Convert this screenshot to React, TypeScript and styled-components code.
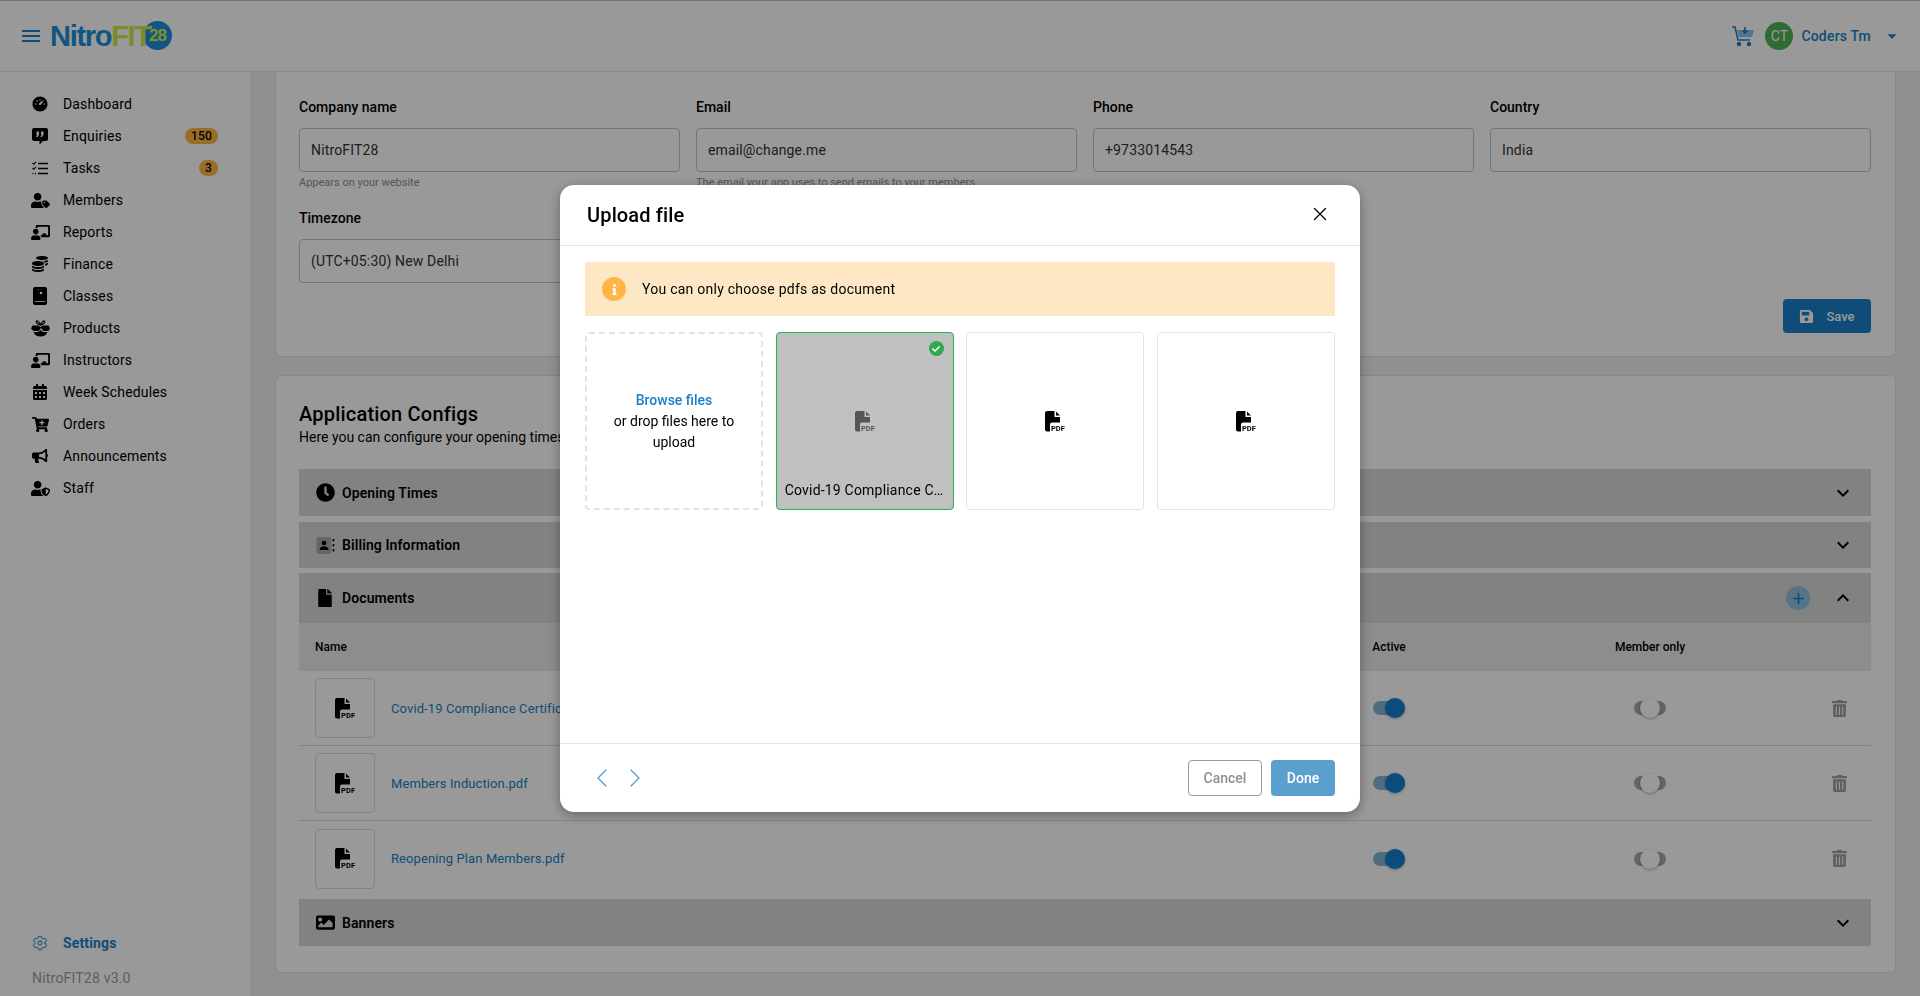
import React from "react";
import styled, { createGlobalStyle } from "styled-components";
import {
	FaUserTag,
	FaCoins,
	FaChalkboardTeacher,
	FaCalendarAlt,
	FaCartPlus,
	FaBullhorn,
	FaUserShield,
	FaClock,
	FaFile,
	FaImage,
	FaSave,
	FaTrashAlt,
	FaCheck,
	FaInfo,
} from "react-icons/fa";
import { RiDashboard3Fill } from "react-icons/ri";
import { IoSettingsOutline } from "react-icons/io5";
import { MdMenu, MdExpandMore, MdExpandLess, MdAdd, MdArrowDropDown } from "react-icons/md";
import { X, ChevronLeft, ChevronRight } from "lucide-react";

const GlobalStyle = createGlobalStyle`
	html, body {
		margin: 0;
		padding: 0;
		height: 100%;
		overflow: hidden;
		background: #f0f0f0;
		font-family: Roboto, "Liberation Sans", sans-serif;
		color: #000;
	}
	* {
		box-sizing: border-box;
	}
`;

const Page = styled.div`
	width: 1920px;
	height: 996px;
	display: flex;
	flex-direction: column;
	overflow: hidden;
`;

const TopBar = styled.header`
	height: 72px;
	flex-shrink: 0;
	background: #fff;
	border-top: 1px solid #a9c6dc;
	border-bottom: 1px solid #e3e3e3;
	display: flex;
	align-items: center;
	padding: 0 17px 0 19px;
	color: #1a7fc7;
`;

const Logo = styled.div`
	position: relative;
	display: flex;
	align-items: center;
	margin-left: 7px;
	width: 122px;
	height: 30px;
	font-family: "Liberation Sans", sans-serif;
	font-weight: 700;
	font-size: 29px;
	letter-spacing: -1.3px;
`;

const LogoCircle = styled.span`
	position: absolute;
	right: 0;
	top: 0;
	width: 29px;
	height: 29px;
	border-radius: 50%;
	background: #1d8fdb;
	color: #d0f050;
	font-size: 17px;
	letter-spacing: -1px;
	display: flex;
	align-items: center;
	justify-content: center;
`;

const LogoNitro = styled.span`
	color: #1d8fdb;
`;

const LogoFit = styled.span`
	position: relative;
	color: #cbe845;
`;

const TopRight = styled.div`
	margin-left: auto;
	display: flex;
	align-items: center;
`;

const Avatar = styled.span`
	width: 28px;
	height: 28px;
	border-radius: 50%;
	background: #4fb255;
	color: #fff;
	font-size: 14px;
	display: flex;
	align-items: center;
	justify-content: center;
	margin: 0 8px 0 10px;
`;

const UserName = styled.span`
	font-size: 14px;
	font-weight: 500;
	letter-spacing: 0.2px;
	margin-right: 10px;
`;

const Body = styled.div`
	flex: 1;
	display: flex;
	min-height: 0;
`;

const Sidebar = styled.aside`
	width: 250px;
	flex-shrink: 0;
	background: #fff;
	display: flex;
	flex-direction: column;
	padding: 16px 0 10px 30px;
`;

const NavList = styled.nav`
	display: flex;
	flex-direction: column;
	flex: 1;
`;

const NavItem = styled.div<{ $active?: boolean }>`
	height: 32px;
	display: flex;
	align-items: center;
	font-size: 14px;
	letter-spacing: 0.15px;
	font-weight: ${(p) => (p.$active ? 700 : 400)};
	color: ${(p) => (p.$active ? "#1a7fc7" : "#000")};
`;

const NavIcon = styled.span`
	width: 20px;
	height: 20px;
	margin-right: 13px;
	display: flex;
	align-items: center;
	justify-content: center;
	font-size: 16px;
`;

const Badge = styled.span`
	margin-left: auto;
	margin-right: 32px;
	height: 16px;
	min-width: 19px;
	padding: 0 6px;
	border-radius: 8px;
	background: #ffb547;
	font-size: 12px;
	font-weight: 500;
	display: flex;
	align-items: center;
	justify-content: center;
`;

const Version = styled.div`
	font-size: 14px;
	color: #9c9c9c;
	margin-top: 11px;
	padding-left: 2px;
	letter-spacing: 0.2px;
`;

const Main = styled.main`
	flex: 1;
	padding: 0 24px 0 25px;
	display: flex;
	flex-direction: column;
	gap: 18px;
	min-width: 0;
`;

const CompanyCard = styled.section`
	height: 285px;
	background: #fff;
	border: 1px solid #e3e3e3;
	border-top: none;
	border-radius: 0 0 6px 6px;
	padding: 26px 24px 0 23px;
`;

const FieldGrid = styled.div`
	display: grid;
	grid-template-columns: repeat(4, 1fr);
	column-gap: 16px;
	row-gap: 0;
`;

const Field = styled.div`
	height: 111px;
`;

const FieldLabel = styled.div`
	font-size: 14px;
	font-weight: 500;
	height: 30px;
	line-height: 18px;
`;

const FieldBox = styled.div`
	height: 44px;
	border: 1px solid #c4c4c4;
	border-radius: 4px;
	padding: 0 11px;
	display: flex;
	align-items: center;
	font-size: 14px;
	letter-spacing: 0.15px;
	color: #333;
`;

const FieldHelp = styled.div`
	font-size: 11px;
	color: #8d8d8d;
	margin-top: 4px;
`;

const SaveRow = styled.div`
	display: flex;
	justify-content: flex-end;
	margin-top: -21px;
`;

const SaveButton = styled.div`
	width: 88px;
	height: 34px;
	border-radius: 4px;
	background: #1a7fc7;
	color: #fff;
	font-size: 13px;
	font-weight: 500;
	display: flex;
	align-items: center;
	justify-content: center;
	gap: 12px;
`;

const ConfigCard = styled.section`
	height: 598px;
	background: #fff;
	border: 1px solid #e3e3e3;
	border-radius: 6px;
	padding: 26px 24px 0 23px;
`;

const ConfigTitle = styled.h2`
	margin: 0 0 1px;
	font-size: 20px;
	font-weight: 500;
	line-height: 24px;
	letter-spacing: 0.2px;
`;

const ConfigSub = styled.p`
	margin: 0 0 22px;
	font-size: 14px;
	line-height: 20px;
`;

const SectionHead = styled.div<{ $height: number; $gap: number }>`
	height: ${(p) => p.$height}px;
	margin-bottom: ${(p) => p.$gap}px;
	background: #d9d9d9;
	display: flex;
	align-items: center;
	padding: 0 16px 0 16px;
	font-size: 14px;
	font-weight: 600;
	letter-spacing: 0.1px;
`;

const SectionIcon = styled.span`
	width: 20px;
	height: 20px;
	margin-right: 7px;
	display: flex;
	align-items: center;
	justify-content: center;
	font-size: 19px;
`;

const Chevron = styled.span`
	margin-left: auto;
	display: flex;
	font-size: 24px;
`;

const AddCircle = styled.span`
	margin-right: 21px;
	width: 24px;
	height: 24px;
	border-radius: 50%;
	background: #8ec2e4;
	color: #1a7fc7;
	display: flex;
	align-items: center;
	justify-content: center;
	font-size: 19px;
`;

const SectionActions = styled.span`
	margin-left: auto;
	display: flex;
	align-items: center;
`;

const ActionChevron = styled.span`
	display: flex;
	font-size: 24px;
`;

const columns = "1fr 200px 322px 60px";

const TableHead = styled.div`
	height: 48px;
	background: #ebebeb;
	display: grid;
	grid-template-columns: ${columns};
	align-items: center;
	padding: 0 0 0 16px;
	font-size: 12px;
	font-weight: 500;
`;

const HeadCell = styled.span<{ $center?: boolean }>`
	text-align: ${(p) => (p.$center ? "center" : "left")};
`;

const Row = styled.div<{ $last?: boolean }>`
	height: 75px;
	display: grid;
	grid-template-columns: ${columns};
	align-items: center;
	padding: 0 0 0 16px;
	margin-bottom: ${(p) => (p.$last ? "3px" : "0")};
	border-bottom: ${(p) => (p.$last ? "none" : "1px solid #dcdcdc")};
`;

const NameCell = styled.div`
	display: flex;
	align-items: center;
	gap: 16px;
	font-size: 13px;
	color: #1a7fc7;
	letter-spacing: 0.1px;
`;

const Thumb = styled.div`
	width: 60px;
	height: 60px;
	border: 1px solid #dcdcdc;
	border-radius: 4px;
	color: #000;
	display: flex;
	align-items: center;
	justify-content: center;
`;

const SwitchCell = styled.div`
	display: flex;
	justify-content: center;
`;

const SwitchTrack = styled.span<{ $on?: boolean }>`
	position: relative;
	width: 32px;
	height: 14px;
	border-radius: 7px;
	background: ${(p) => (p.$on ? "#84b6d8" : "#a8a8a8")};
`;

const SwitchKnob = styled.span<{ $on?: boolean }>`
	position: absolute;
	top: -3px;
	left: ${(p) => (p.$on ? "12px" : "6px")};
	width: 20px;
	height: 20px;
	border-radius: 50%;
	background: ${(p) => (p.$on ? "#127fcf" : "#fff")};
	box-shadow: 0 1px 3px rgba(0, 0, 0, 0.3);
`;

const TrashCell = styled.div`
	display: flex;
	justify-content: flex-end;
	padding-right: 23px;
	font-size: 17px;
	color: #a0a0a0;
`;

const Overlay = styled.div`
	position: fixed;
	inset: 0;
	background: rgba(0, 0, 0, 0.4);
`;

const Modal = styled.div`
	position: absolute;
	left: 560px;
	top: 185px;
	width: 800px;
	height: 627px;
	background: #fff;
	border-radius: 14px;
	box-shadow: 0 3px 12px rgba(0, 0, 0, 0.35);
	display: flex;
	flex-direction: column;
`;

const ModalHead = styled.div`
	height: 61px;
	flex-shrink: 0;
	border-bottom: 1px solid #e3e3e3;
	padding: 0 29px 0 27px;
	display: flex;
	align-items: center;
	justify-content: space-between;
`;

const ModalTitle = styled.h2`
	margin: 0;
	font-size: 20px;
	font-weight: 500;
	letter-spacing: 0.15px;
`;

const CloseIcon = styled.span`
	display: flex;
	margin-top: -2px;
`;

const ModalBody = styled.div`
	flex: 1;
	padding: 16px 25px 0;
`;

const Alert = styled.div`
	height: 54px;
	background: #fde7c5;
	display: flex;
	align-items: center;
	padding-left: 17px;
	font-size: 14px;
	letter-spacing: 0.25px;
`;

const AlertIcon = styled.span`
	width: 24px;
	height: 24px;
	border-radius: 50%;
	background: #ffb547;
	color: #fff;
	display: flex;
	align-items: center;
	justify-content: center;
	font-size: 11px;
	margin-right: 16px;
`;

const TileGrid = styled.div`
	display: grid;
	grid-template-columns: repeat(4, 1fr);
	gap: 12.67px;
	margin-top: 16px;
`;

const DropTile = styled.div`
	height: 178px;
	border: 2px dashed #e3e3e3;
	border-radius: 4px;
	display: flex;
	flex-direction: column;
	align-items: center;
	justify-content: center;
	text-align: center;
	font-size: 14px;
	line-height: 21px;
	padding: 0 20px;
`;

const BrowseLink = styled.span`
	color: #1a7fc7;
	font-weight: 500;
`;

const FileTile = styled.div<{ $selected?: boolean }>`
	position: relative;
	height: 178px;
	border: ${(p) => (p.$selected ? "1.5px solid #22b455" : "1px solid #e3e3e3")};
	border-radius: 4px;
	background: ${(p) => (p.$selected ? "#c0c0c0" : "#fff")};
	color: ${(p) => (p.$selected ? "#555" : "#000")};
	display: flex;
	align-items: center;
	justify-content: center;
`;

const TileCheck = styled.span`
	position: absolute;
	top: 8px;
	right: 9px;
	width: 15px;
	height: 15px;
	border-radius: 50%;
	background: #2fa84f;
	color: #fff;
	font-size: 8px;
	display: flex;
	align-items: center;
	justify-content: center;
`;

const TileName = styled.span`
	position: absolute;
	left: 8px;
	right: 8px;
	bottom: 11px;
	font-size: 14px;
	color: #000;
	white-space: nowrap;
	overflow: hidden;
	text-overflow: ellipsis;
	letter-spacing: 0.2px;
`;

const ModalFoot = styled.div`
	height: 69px;
	flex-shrink: 0;
	border-top: 1px solid #e3e3e3;
	padding: 0 25px 0 26px;
	display: flex;
	align-items: center;
`;

const Pager = styled.div`
	display: flex;
	gap: 1px;
	color: #5aa0cf;
`;

const FootActions = styled.div`
	margin-left: auto;
	display: flex;
	gap: 9px;
`;

const CancelButton = styled.div`
	width: 74px;
	height: 36px;
	border: 1px solid #9b9b9b;
	border-radius: 4px;
	color: #8f8f8f;
	font-size: 14px;
	font-weight: 500;
	display: flex;
	align-items: center;
	justify-content: center;
`;

const DoneButton = styled.div`
	width: 64px;
	height: 36px;
	border-radius: 4px;
	background: #5aa0cf;
	color: #fff;
	font-size: 14px;
	font-weight: 500;
	display: flex;
	align-items: center;
	justify-content: center;
`;

const PdfIcon = () => (
	<svg width="20" height="21" viewBox="0 0 20 21" fill="currentColor">
		<path d="M2 0h7.500v6H15v5.500H7a2 2 0 0 0-2 2V20.500H2a2 2 0 0 1-2-2V2a2 2 0 0 1 2-2z" />
		<path d="M11 0.500L15 4.500h-4z" />
		<text x="6" y="19.500" fontSize="7.500" fontWeight="700" fontFamily="Roboto, sans-serif">
			PDF
		</text>
	</svg>
);

const CartIcon = () => (
	<svg width="24" height="24" viewBox="0 0 24 24" fill="none" stroke="#1a7fc7" strokeWidth="1.6">
		<path d="M1 3h3l3 13h12" />
		<path d="M6 6h17l-2 7H8z" fill="#8ec2e4" stroke="none" />
		<circle cx="8" cy="20" r="1.4" fill="#1a7fc7" />
		<circle cx="18" cy="20" r="1.4" fill="#1a7fc7" />
		<path d="M14 3v6M11.500 6.500L14 9l2.500-2.500" />
	</svg>
);

const QuoteBubbleIcon = () => (
	<svg width="16" height="17" viewBox="0 0 16 17" fill="currentColor">
		<path d="M2 0h12a2 2 0 0 1 2 2v9a2 2 0 0 1-2 2h-3l-3.500 3.500V13H2a2 2 0 0 1-2-2V2a2 2 0 0 1 2-2z" />
		<path d="M4.500 3.500h2.500v3L5.500 9H4l1-2.500h-.5zM9 3.500h2.500v3L10 9H8.500l1-2.500H9z" fill="#fff" />
	</svg>
);

const TaskListIcon = () => (
	<svg width="16" height="15" viewBox="0 0 16 15" fill="none" stroke="currentColor">
		<path d="M6 2.500h10M6 7.500h10M6 12.500h10" strokeWidth="1.400" />
		<path d="M0.500 2l1.300 1.300L4 0.800M0.500 7l1.300 1.300L4 5.800" strokeWidth="1.100" />
		<path d="M0.500 12.500h1M3 12.500h1" strokeWidth="1.600" />
	</svg>
);

const BookStarIcon = () => (
	<svg width="14" height="18" viewBox="0 0 14 18" fill="currentColor">
		<path d="M2 0h10a2 2 0 0 1 2 2v14a2 2 0 0 1-2 2H2a2 2 0 0 1-2-2V2a2 2 0 0 1 2-2z" />
		<path d="M1.500 14.500h11" stroke="#fff" strokeWidth="0.800" />
		<circle cx="8" cy="6" r="1.300" fill="#fff" />
		<circle cx="5" cy="2.800" r="0.500" fill="#fff" />
	</svg>
);

const ProductsIcon = () => (
	<svg width="19" height="17" viewBox="0 0 19 17" fill="currentColor">
		<path
			d="M9.500 5C8.500 2 6.200 0.200 5.400 1.200S6.500 4.500 9.500 5zM9.500 5c1-3 3.300-4.800 4.100-3.800S12.500 4.500 9.500 5z"
			fill="none"
			stroke="currentColor"
			strokeWidth="1.200"
		/>
		<path d="M1.500 5.500h5.500l2.500 1.500 2.500-1.500h5.500l1.500 3-1.500 2.500h-5l-2.500-3-2.500 3h-5L0 8.500z" />
		<path d="M2.500 12h4.500l2.500-2 2.500 2h4.500c-1 3-4 4.500-7 4.500s-6-1.500-7-4.500z" />
	</svg>
);

const BillingIcon = () => (
	<svg width="19" height="19" viewBox="0 0 19 19">
		<rect x="0.500" y="1" width="15" height="17" rx="2" fill="#aaa" />
		<circle cx="8" cy="7" r="2.300" fill="#000" />
		<path d="M3.500 14c0-2.500 2-3.800 4.500-3.800s4.500 1.300 4.500 3.800z" fill="#000" />
		<path d="M17.500 3v2.500M17.500 8v2.500M17.500 13v2.500" stroke="#000" strokeWidth="1.600" />
	</svg>
);

const navItems = [
	{ label: "Dashboard", icon: <RiDashboard3Fill size={18} /> },
	{ label: "Enquiries", icon: <QuoteBubbleIcon />, badge: "150" },
	{ label: "Tasks", icon: <TaskListIcon />, badge: "3" },
	{ label: "Members", icon: <FaUserTag size={19} /> },
	{ label: "Reports", icon: <FaChalkboardTeacher size={19} /> },
	{ label: "Finance", icon: <FaCoins /> },
	{ label: "Classes", icon: <BookStarIcon /> },
	{ label: "Products", icon: <ProductsIcon /> },
	{ label: "Instructors", icon: <FaChalkboardTeacher size={19} /> },
	{ label: "Week Schedules", icon: <FaCalendarAlt /> },
	{ label: "Orders", icon: <FaCartPlus size={17} /> },
	{ label: "Announcements", icon: <FaBullhorn /> },
	{ label: "Staff", icon: <FaUserShield size={19} /> },
];

const documents = ["Covid-19 Compliance Certificate.pdf", "Members Induction.pdf", "Reopening Plan Members.pdf"];

export default function App() {
	return (
		<>
			<GlobalStyle />
			<Page>
				<TopBar>
					<MdMenu size={24} />
					<Logo>
						<LogoCircle>28</LogoCircle>
						<LogoNitro>Nitro</LogoNitro>
						<LogoFit>FIT</LogoFit>
					</Logo>
					<TopRight>
						<CartIcon />
						<Avatar>CT</Avatar>
						<UserName>Coders Tm</UserName>
						<MdArrowDropDown size={22} />
					</TopRight>
				</TopBar>
				<Body>
					<Sidebar>
						<NavList>
							{navItems.map((item) => (
								<NavItem key={item.label}>
									<NavIcon>{item.icon}</NavIcon>
									{item.label}
									{item.badge && <Badge>{item.badge}</Badge>}
								</NavItem>
							))}
						</NavList>
						<NavItem $active>
							<NavIcon>
								<IoSettingsOutline />
							</NavIcon>
							Settings
						</NavItem>
						<Version>NitroFIT28 v3.0</Version>
					</Sidebar>
					<Main>
						<CompanyCard>
							<FieldGrid>
								<Field>
									<FieldLabel>Company name</FieldLabel>
									<FieldBox>NitroFIT28</FieldBox>
									<FieldHelp>Appears on your website</FieldHelp>
								</Field>
								<Field>
									<FieldLabel>Email</FieldLabel>
									<FieldBox>email@change.me</FieldBox>
									<FieldHelp>The email your app uses to send emails to your members</FieldHelp>
								</Field>
								<Field>
									<FieldLabel>Phone</FieldLabel>
									<FieldBox>+9733014543</FieldBox>
								</Field>
								<Field>
									<FieldLabel>Country</FieldLabel>
									<FieldBox>India</FieldBox>
								</Field>
								<Field>
									<FieldLabel>Timezone</FieldLabel>
									<FieldBox>(UTC+05:30) New Delhi</FieldBox>
								</Field>
							</FieldGrid>
							<SaveRow>
								<SaveButton>
									<FaSave size={15} />
									Save
								</SaveButton>
							</SaveRow>
						</CompanyCard>
						<ConfigCard>
							<ConfigTitle>Application Configs</ConfigTitle>
							<ConfigSub>Here you can configure your opening times, billing information and documents</ConfigSub>
							<SectionHead $height={47} $gap={6}>
								<SectionIcon>
									<FaClock />
								</SectionIcon>
								Opening Times
								<Chevron>
									<MdExpandMore />
								</Chevron>
							</SectionHead>
							<SectionHead $height={46} $gap={5}>
								<SectionIcon>
									<BillingIcon />
								</SectionIcon>
								Billing Information
								<Chevron>
									<MdExpandMore />
								</Chevron>
							</SectionHead>
							<SectionHead $height={50} $gap={0}>
								<SectionIcon>
									<FaFile size={18} />
								</SectionIcon>
								Documents
								<SectionActions>
									<AddCircle>
										<MdAdd />
									</AddCircle>
									<ActionChevron>
										<MdExpandLess />
									</ActionChevron>
								</SectionActions>
							</SectionHead>
							<TableHead>
								<HeadCell>Name</HeadCell>
								<HeadCell $center>Active</HeadCell>
								<HeadCell $center>Member only</HeadCell>
								<HeadCell />
							</TableHead>
							{documents.map((doc, i) => (
								<Row key={doc} $last={i === documents.length - 1}>
									<NameCell>
										<Thumb>
											<PdfIcon />
										</Thumb>
										{doc}
									</NameCell>
									<SwitchCell>
										<SwitchTrack $on>
											<SwitchKnob $on />
										</SwitchTrack>
									</SwitchCell>
									<SwitchCell>
										<SwitchTrack>
											<SwitchKnob />
										</SwitchTrack>
									</SwitchCell>
									<TrashCell>
										<FaTrashAlt />
									</TrashCell>
								</Row>
							))}
							<SectionHead $height={47} $gap={0}>
								<SectionIcon>
									<FaImage />
								</SectionIcon>
								Banners
								<Chevron>
									<MdExpandMore />
								</Chevron>
							</SectionHead>
						</ConfigCard>
					</Main>
				</Body>
			</Page>
			<Overlay>
				<Modal>
					<ModalHead>
						<ModalTitle>Upload file</ModalTitle>
						<CloseIcon>
							<X size={22} strokeWidth={1.4} />
						</CloseIcon>
					</ModalHead>
					<ModalBody>
						<Alert>
							<AlertIcon>
								<FaInfo />
							</AlertIcon>
							You can only choose pdfs as document
						</Alert>
						<TileGrid>
							<DropTile>
								<BrowseLink>Browse files</BrowseLink>
								or drop files here to upload
							</DropTile>
							<FileTile $selected>
								<TileCheck>
									<FaCheck />
								</TileCheck>
								<PdfIcon />
								<TileName>Covid-19 Compliance Certificate.pdf</TileName>
							</FileTile>
							<FileTile>
								<PdfIcon />
							</FileTile>
							<FileTile>
								<PdfIcon />
							</FileTile>
						</TileGrid>
					</ModalBody>
					<ModalFoot>
						<Pager>
							<ChevronLeft size={32} strokeWidth={1} />
							<ChevronRight size={32} strokeWidth={1} />
						</Pager>
						<FootActions>
							<CancelButton>Cancel</CancelButton>
							<DoneButton>Done</DoneButton>
						</FootActions>
					</ModalFoot>
				</Modal>
			</Overlay>
		</>
	);
}
